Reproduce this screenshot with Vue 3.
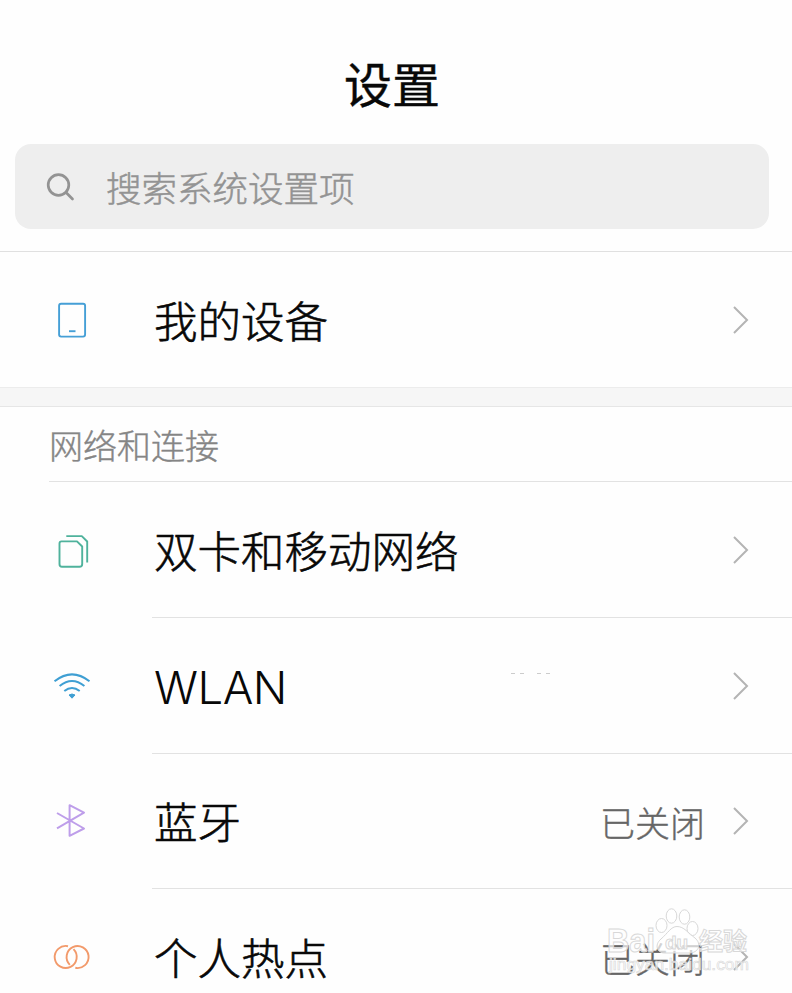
<template>
  <div class="settings">
    <header class="header">
      <h1 class="title">设置</h1>
      <div class="search">
        <svg class="search-icon" viewBox="0 0 30 30" fill="none" stroke="#939393" stroke-width="2.7" stroke-linecap="round">
          <circle cx="12.5" cy="13" r="10.3" />
          <path d="M20.3 20.8L26.5 27" />
        </svg>
        <span class="search-text">搜索系统设置项</span>
      </div>
    </header>

    <div class="row device">
      <svg class="icon" viewBox="0 0 40 40" fill="none" stroke="#459fd6" stroke-width="1.9">
        <rect x="7.1" y="3.8" width="26" height="32.8" rx="2" />
        <path d="M17 31.2H23.5" />
      </svg>
      <span class="label">我的设备</span>
      <svg class="arrow" viewBox="0 0 18 30"><path d="M2 2L15 15L2 28" /></svg>
    </div>

    <div class="gap"></div>
    <h2 class="section-title">网络和连接</h2>

    <div v-for="item in items" :key="item.name" class="row item" :class="item.icon">
      <svg v-if="item.icon === 'sim'" class="icon" viewBox="0 0 40 40" fill="none" stroke="#4fb29c" stroke-width="1.9" stroke-linejoin="round">
        <path d="M9.5 11.4H25L30.2 16.5V34Q30.2 36.8 27.5 36.8H10Q7.5 36.8 7.5 34V13.5Q7.5 11.4 9.5 11.4Z" />
        <path d="M14.3 6.1H29.8L35.2 11.5V32.5" />
      </svg>
      <svg v-else-if="item.icon === 'wifi'" class="icon" viewBox="0 0 40 40" fill="none" stroke="#3f9fd3" stroke-width="2">
        <path d="M2.5 15.3Q20 1.4 37.5 15.3" />
        <path d="M7.6 20Q20 10 32.4 20" />
        <path d="M12.3 25Q20 18.9 27.7 25" />
        <path d="M17 29Q20 27 23 29L20 32.2Z" fill="#3f9fd3" stroke-width="1" />
      </svg>
      <svg v-else-if="item.icon === 'bluetooth'" class="icon" viewBox="0 0 40 40" fill="none" stroke="#be9eea" stroke-width="2" stroke-linejoin="round">
        <path d="M5 12L32 27.5L17.6 34.8V4.2L32 11.6L5 27.3" />
      </svg>
      <svg v-else class="icon" viewBox="0 0 40 40" fill="none" stroke="#f29a6b" stroke-width="1.9">
        <path d="M16 9.2A11 11 0 1 0 21.5 12.2" />
        <path d="M17.8 27.8A11 11 0 1 1 23.3 30.8" />
      </svg>
      <span class="label" :class="{ latin: item.icon === 'wifi' }">{{ item.name }}</span>
      <span v-if="item.icon === 'wifi'" class="traces"><i></i><i></i><i></i><i></i></span>
      <span v-if="item.value" class="value">{{ item.value }}</span>
      <svg class="arrow" viewBox="0 0 18 30"><path d="M2 2L15 15L2 28" /></svg>
    </div>

    <svg class="watermark" viewBox="0 0 150 74">
      <g fill="#fff" fill-opacity=".7" stroke="#d8d8d8" stroke-width="1">
        <ellipse cx="53.5" cy="21.5" rx="5.5" ry="7" />
        <ellipse cx="63.5" cy="12" rx="5.3" ry="7.2" />
        <ellipse cx="76.5" cy="13" rx="5.3" ry="7.2" />
        <ellipse cx="84.5" cy="24.5" rx="5.5" ry="7" />
        <path d="M69 22.5C63 22.5 60 29 53 35C46 41 49 49 57 49H81C91 49 94 40 87 34C80 29 76 22.5 69 22.5Z" />
        <text x="-1" y="48" class="brand" textLength="48" lengthAdjust="spacingAndGlyphs">Bai</text>
        <text x="57" y="45" class="du">du</text>
        <text x="91" y="46" class="brand-cn" textLength="48">经验</text>
        <text x="1" y="66" class="site" textLength="140" lengthAdjust="spacingAndGlyphs">jingyan.baidu.com</text>
      </g>
    </svg>
  </div>
</template>

<script setup>
const items = [
  { icon: 'sim', name: '双卡和移动网络' },
  { icon: 'wifi', name: 'WLAN' },
  { icon: 'bluetooth', name: '蓝牙', value: '已关闭' },
  { icon: 'hotspot', name: '个人热点', value: '已关闭' }
];
</script>

<style>
body {
  margin: 0;
  background: #fefefe;
}
</style>

<style scoped>
.settings {
  position: relative;
  height: 993px;
  overflow: hidden;
  background: #fefefe;
  color: #080808;
  font-family: "Noto Sans CJK SC", sans-serif;
  font-weight: 300;
}

.header {
  box-sizing: border-box;
  height: 252px;
  padding: 47px 23px 0 15px;
  border-bottom: 1px solid #e0e0e0;
}

.title {
  margin: 0 0 27px;
  font-size: 48px;
  line-height: 70px;
  font-weight: 400;
  text-align: center;
  -webkit-text-stroke: 0.4px;
}

.search {
  display: flex;
  align-items: center;
  height: 85px;
  padding-left: 31px;
  border-radius: 16px;
  background: #eee;
}

.search-icon {
  width: 30px;
  height: 30px;
  margin-right: 30px;
}

.search-text {
  font-size: 35.5px;
  color: #939393;
  -webkit-text-stroke: 0.5px;
}

.row {
  display: flex;
  align-items: center;
  box-sizing: border-box;
  height: 135px;
  padding: 0 42px 0 52px;
}

.row.item {
  padding-top: 1px;
}

.row.wifi {
  height: 136px;
  padding-top: 2px;
}

.row.hotspot {
  padding-top: 3px;
}

.row + .row {
  background: linear-gradient(#e2e2e2, #e2e2e2) 152px 0 / 640px 1px no-repeat;
}

.icon {
  flex: none;
  width: 40px;
  height: 40px;
  margin-right: 62px;
}

.label {
  font-size: 43.5px;
  line-height: 64px;
  -webkit-text-stroke: 0.6px;
}

.label.latin {
  width: 134px;
  padding-top: 4px;
  font-family: Inter, "Liberation Sans", sans-serif;
  font-size: 45.5px;
  letter-spacing: -0.5px;
  -webkit-text-stroke: 0;
}

.value {
  margin-left: auto;
  font-size: 35px;
  color: #666;
  -webkit-text-stroke: 0.4px;
}

.arrow {
  flex: none;
  width: 18px;
  height: 30px;
  margin-left: auto;
  fill: none;
  stroke: #b4b4b4;
  stroke-width: 2;
}

.value + .arrow {
  margin-left: 27px;
}

.traces {
  display: flex;
  gap: 5px;
  margin: -26px 0 0 223px;
}

.traces i {
  width: 4px;
  height: 1px;
  background: #ccc;
}

.traces i:nth-child(3) {
  margin-left: 8px;
}

.gap {
  box-sizing: border-box;
  height: 20px;
  border-top: 1px solid #ececec;
  border-bottom: 1px solid #e6e6e6;
  background: #f6f6f6;
}

.section-title {
  box-sizing: border-box;
  height: 75px;
  margin: 0 0 0 49px;
  border-bottom: 1px solid #e2e2e2;
  font-size: 34px;
  line-height: 76px;
  font-weight: 300;
  color: #858585;
  -webkit-text-stroke: 0.4px;
}

.watermark {
  position: absolute;
  left: 608px;
  top: 904px;
  width: 150px;
  height: 74px;
}

.brand {
  font: bold 34px "Liberation Sans", sans-serif;
}

.du {
  font: bold 19px "Liberation Sans", sans-serif;
}

.brand-cn {
  font: bold 24px "Noto Sans CJK SC", sans-serif;
}

.site {
  font: 16px "Liberation Sans", sans-serif;
  stroke-width: 0.6;
}
</style>
